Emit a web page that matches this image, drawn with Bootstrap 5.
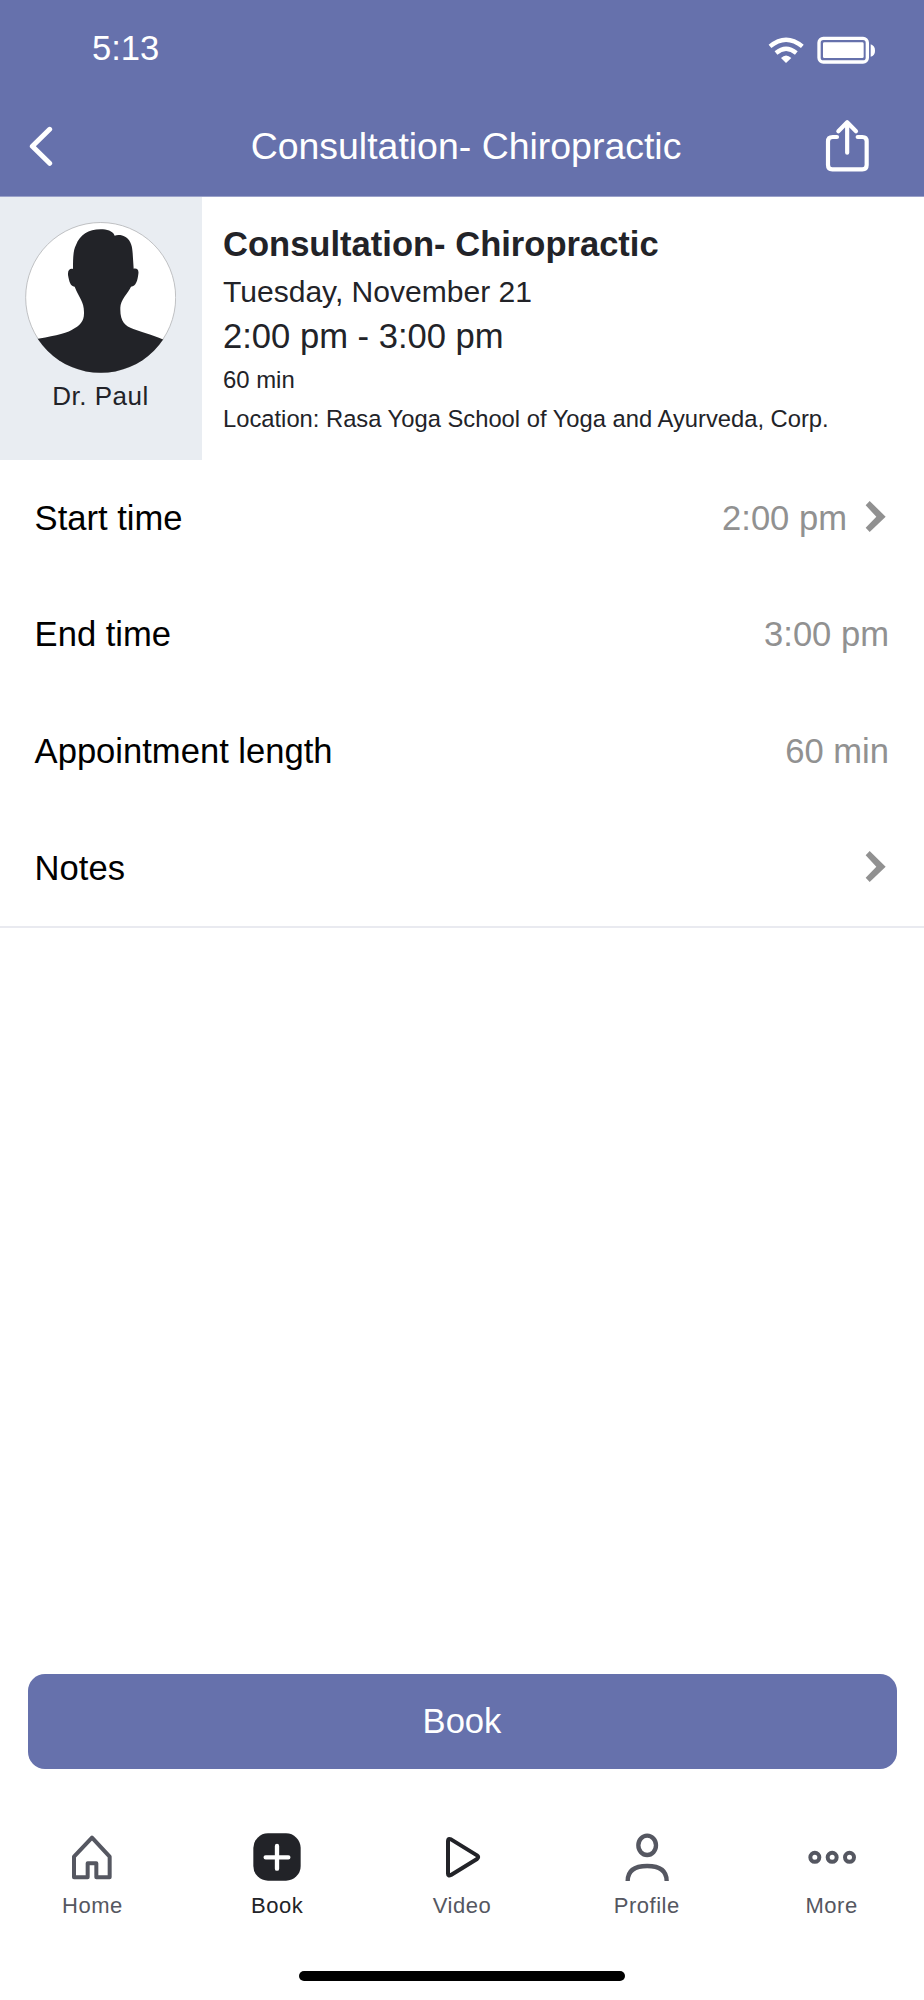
<!DOCTYPE html>
<html lang="en">
<head>
<meta charset="utf-8">
<meta name="viewport" content="width=device-width, initial-scale=1">
<title>Consultation- Chiropractic</title>
<link href="https://cdn.jsdelivr.net/npm/bootstrap@5.3.0/dist/css/bootstrap.min.css" rel="stylesheet">
<style>
  :root { --brand: #6671ac; --ink: #222328; --muted-ink: #555761; }
  body { font-family: "Liberation Sans", Arial, sans-serif; color: var(--ink); background: #fff; }
  svg { display: block; flex: none; }
  .screen { width: 924px; height: 2000px; overflow: hidden; }
  .app-header { background: var(--brand); height: 197px; border-bottom: 1px solid #9aa1c9; }
  .status-row { height: 95px; padding: 0 48px 0 92px; font-size: 34.6px; line-height: 40px; }
  .title-row { height: 101px; padding: 0 54px 0 29px; }
  .title-row h1 { font-size: 37.45px; line-height: 44px; padding-left: 29px; }
  .summary { height: 263px; }
  .staff-panel { width: 202px; background: #e9edf2; padding: 25px 1px 0 0; }
  .staff-name { font-size: 26px; letter-spacing: .5px; line-height: 30px; margin-top: 8px; }
  .details { padding: 24px 0 0 21px; white-space: nowrap; }
  .service { font-size: 34.55px; line-height: 46.6px; }
  .date { font-size: 30.05px; line-height: 47.6px; }
  .hours { font-size: 34.6px; line-height: 42px; }
  .length { font-size: 23.9px; line-height: 45.4px; }
  .place { font-size: 23.75px; line-height: 32px; }
  .option-list { border-bottom: 2px solid #e9eaf0; }
  .option { height: 116.6px; padding: 1px 35px 0 34.6px; font-size: 34.6px; color: #000; }
  .option-value { color: #919191; }
  .option svg { margin: -5px -1px 0 0; }
  .book-btn { --bs-btn-color: #fff; --bs-btn-bg: var(--brand); --bs-btn-hover-color: #fff; --bs-btn-hover-bg: #5964a0;
    height: 95px; border: 0; border-radius: 17px; font-size: 34.6px; line-height: 40px; padding-top: 4px; }
  .book-wrap { padding: 0 27.5px 63px 27.5px; }
  .tab-item { flex: 1 1 0; color: var(--muted-ink); font-size: 22px; letter-spacing: .5px; line-height: 30px; text-decoration: none; gap: 9px; }
  .tab-item.active { color: var(--ink); }
  .tab-zone { height: 139px; }
  .home-bar { width: 326px; height: 10px; background: #000; margin-bottom: 19px; }
</style>
</head>
<body>
<div class="screen d-flex flex-column">
  <header class="app-header text-white flex-shrink-0">
    <div class="status-row d-flex align-items-center justify-content-between">
      <span>5:13</span>
      <div class="d-flex align-items-center pt-1" style="gap:13px">
        <svg width="36" height="27" viewBox="919 109 108 81" fill="none" stroke="#fff" stroke-width="13">
          <path d="M925 140 Q973 100 1022 140"/>
          <path d="M943 160 Q973 135 1004 160"/>
          <path d="M958 175 Q973 160 989 175 L973 190Z" fill="#fff" stroke="none"/>
        </svg>
        <svg width="59" height="28" viewBox="1066 109 177 84">
          <rect x="1072" y="116" width="145" height="71" rx="13" fill="none" stroke="#fff" stroke-width="10"/>
          <rect x="1084" y="128" width="122" height="47" rx="4" fill="#fff"/>
          <path d="M1227 134 Q1240 138 1240 153 T1227 171Z" fill="#fff"/>
        </svg>
      </div>
    </div>
    <div class="title-row d-flex align-items-center justify-content-between">
      <svg width="25" height="42" viewBox="87 375 75 126" fill="none" stroke="#fff" stroke-width="15" stroke-linecap="round" stroke-linejoin="round"><path d="M149 388 L97 439 L149 490"/></svg>
      <h1 class="fw-normal m-0 ms-4">Consultation- Chiropractic</h1>
      <svg width="45" height="54" viewBox="1089 357 135 162" fill="none" stroke="#fff" stroke-width="12.500" stroke-linecap="round" stroke-linejoin="round">
        <path d="M1125 411 H1112 Q1098 411 1098 424 V495 Q1098 508 1111 508 H1201 Q1214 508 1214 495 V424 Q1214 411 1201 411 H1187"/>
        <path d="M1155.500 458 V368 M1129 394 L1155.500 367 L1182 394"/>
      </svg>
    </div>
  </header>

  <section class="summary d-flex flex-shrink-0">
    <div class="staff-panel d-flex flex-column align-items-center">
      <svg width="151" height="151" viewBox="75 96 453 453">
        <defs><clipPath id="face"><circle cx="302" cy="322.500" r="226"/></clipPath></defs>
        <circle cx="302" cy="322.500" r="225" fill="#fff" stroke="#b4b6b8" stroke-width="2.500"/>
        <path clip-path="url(#face)" fill="#222328" d="M302 118C320 118 338 122 344 137C352 134 366 134 378 142C394 154 397 172 398 190L401 236C412 234 417 240 415 252C413 270 408 290 393 290C385 308 360 330 361 355C360 395 375 408 400 417C435 430 470 439 500 453V560H100V449C150 440 195 432 215 420C240 407 252 395 252 370C253 335 238 325 224 290C210 288 208 275 204 255C203 240 210 235 219 237C219 200 220 180 228 165C240 135 265 118 302 118Z"/>
      </svg>
      <div class="staff-name">Dr. Paul</div>
    </div>
    <div class="details">
      <div class="service fw-bold">Consultation- Chiropractic</div>
      <div class="date">Tuesday, November 21</div>
      <div class="hours">2:00 pm - 3:00 pm</div>
      <div class="length">60 min</div>
      <div class="place">Location: Rasa Yoga School of Yoga and Ayurveda, Corp.</div>
    </div>
  </section>

  <section class="option-list flex-shrink-0">
    <div class="option d-flex align-items-center justify-content-between">
      <span>Start time</span>
      <span class="option-value d-flex align-items-center">2:00 pm
        <svg class="ms-3" width="27" height="34" viewBox="912 327 81 102" fill="#919191"><path d="M920 346L932 333L980 380L932 426L920 413L952 380Z"/></svg>
      </span>
    </div>
    <div class="option d-flex align-items-center justify-content-between"><span>End time</span><span class="option-value">3:00 pm</span></div>
    <div class="option d-flex align-items-center justify-content-between"><span>Appointment length</span><span class="option-value">60 min</span></div>
    <div class="option d-flex align-items-center justify-content-between">
      <span>Notes</span>
      <svg width="27" height="34" viewBox="912 327 81 102" fill="#919191"><path d="M920 346L932 333L980 380L932 426L920 413L952 380Z"/></svg>
    </div>
  </section>

  <footer class="mt-auto flex-shrink-0">
    <div class="book-wrap"><button type="button" class="btn book-btn w-100">Book</button></div>
    <nav class="tab-zone d-flex align-items-start">
      <a href="#" class="tab-item d-flex flex-column align-items-center">
        <svg width="50" height="50" viewBox="202 546 150 150" fill="none" stroke="#555761" stroke-width="12" stroke-linejoin="round"><path d="M277 563L330 620V682H290V640H264V682H223V620Z"/></svg>
        Home</a>
      <a href="#" class="tab-item active d-flex flex-column align-items-center">
        <svg width="50" height="50" viewBox="756 546 150 150"><rect x="760" y="550" width="142" height="142" rx="44" fill="#222328"/><path d="M831 588V656M797 622H865" stroke="#fff" stroke-width="13" stroke-linecap="round"/></svg>
        Book</a>
      <a href="#" class="tab-item d-flex flex-column align-items-center">
        <svg width="50" height="50" viewBox="1311 546 150 150" fill="none" stroke="#222328" stroke-width="12" stroke-linejoin="round"><path d="M1344 573Q1344 564 1353 568L1431 616Q1438 621 1431 627L1353 675Q1344 679 1344 671Z"/></svg>
        Video</a>
      <a href="#" class="tab-item d-flex flex-column align-items-center">
        <svg width="50" height="50" viewBox="605 546 150 150" fill="none" stroke="#555761" stroke-width="13"><ellipse cx="680.500" cy="586" rx="26.500" ry="29"/><path d="M622 693C622 660 645 648 680.500 648S739 660 739 693"/></svg>
        Profile</a>
      <a href="#" class="tab-item d-flex flex-column align-items-center">
        <svg width="50" height="50" viewBox="1160 546 150 150" fill="none" stroke="#555761" stroke-width="12"><circle cx="1183.500" cy="622" r="13.500"/><circle cx="1235.500" cy="622" r="13.500"/><circle cx="1287.500" cy="622" r="13.500"/></svg>
        More</a>
    </nav>
    <div class="home-bar rounded-pill mx-auto"></div>
  </footer>
</div>
<script src="https://cdn.jsdelivr.net/npm/bootstrap@5.3.0/dist/js/bootstrap.bundle.min.js"></script>
</body>
</html>
